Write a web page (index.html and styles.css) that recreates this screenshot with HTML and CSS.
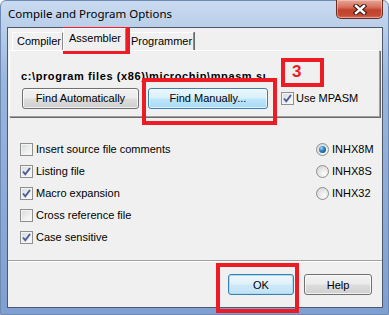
FILE: index.html
```html
<!DOCTYPE html>
<html lang="en">
<head>
    <meta charset="UTF-8">
    <title>Compile and Program Options</title>
    <link rel="stylesheet" href="styles.css">
</head>
<body>

    <div class="window">
        <div class="titlebar">
            <span class="title">Compile and Program Options</span>
            <span class="close">
                <svg width="14" height="11" viewBox="0 0 14 11">
                    <path d="M3 2 L11 9 M11 2 L3 9" stroke="#3a1d18" stroke-width="4.6" stroke-linecap="square"/>
                    <path d="M3 2 L11 9 M11 2 L3 9" stroke="#fff" stroke-width="2.4" stroke-linecap="square"/>
                </svg>
            </span>
        </div>

        <div class="client">
            <div class="tabs">
                <div class="tab">Compiler</div>
                <div class="tab active">Assembler</div>
                <div class="tab">Programmer</div>
            </div>

            <div class="panel">
                <div class="path">c:\program files (x86)\microchip\mpasm suite</div>
                <div class="panel-row">
                    <button class="btn find-auto">Find Automatically</button>
                    <button class="btn hot find-man">Find Manually...</button>
                    <label class="check use-mpasm">
                        <span class="box checked"><svg width="11" height="11" viewBox="0 0 11 11"><path d="M2 5.5 L4.3 8.3 L9 2" fill="none" stroke="#4a5d96" stroke-width="1.9"/></svg></span>
                        Use MPASM
                    </label>
                </div>
            </div>

            <div class="options">
                <div class="checks">
                    <label class="check"><span class="box"></span>Insert source file comments</label>
                    <label class="check"><span class="box checked"><svg width="11" height="11" viewBox="0 0 11 11"><path d="M2 5.5 L4.3 8.3 L9 2" fill="none" stroke="#4a5d96" stroke-width="1.9"/></svg></span>Listing file</label>
                    <label class="check"><span class="box checked"><svg width="11" height="11" viewBox="0 0 11 11"><path d="M2 5.5 L4.3 8.3 L9 2" fill="none" stroke="#4a5d96" stroke-width="1.9"/></svg></span>Macro expansion</label>
                    <label class="check"><span class="box"></span>Cross reference file</label>
                    <label class="check"><span class="box checked"><svg width="11" height="11" viewBox="0 0 11 11"><path d="M2 5.5 L4.3 8.3 L9 2" fill="none" stroke="#4a5d96" stroke-width="1.9"/></svg></span>Case sensitive</label>
                </div>
                <div class="radios">
                    <label class="radio"><span class="dot selected"></span>INHX8M</label>
                    <label class="radio"><span class="dot"></span>INHX8S</label>
                    <label class="radio"><span class="dot"></span>INHX32</label>
                </div>
            </div>

            <div class="separator"></div>

            <div class="footer">
                <button class="btn default ok">OK</button>
                <button class="btn help">Help</button>
            </div>
        </div>

        <!-- rode markeringar ovanpa skarmbilden -->
        <div class="mark mark-tab"></div>
        <div class="mark mark-step">3</div>
        <div class="mark mark-find"></div>
        <div class="mark mark-ok"></div>
    </div>

</body>
</html>
```

FILE: styles.css
```css
/* Grundstilar */
body {
    margin: 0;
    background-color: #fff;
    font-family: "Liberation Sans", Arial, sans-serif;
    font-size: 11px;
    color: #000;
}
.window {
    position: relative;
    width: 389px;
    height: 315px;
    box-sizing: border-box;
    border: 1px solid #6f8bb3;
    border-radius: 6px 6px 0 0;
    padding: 0 5px 6px 6px;
    display: flex;
    flex-direction: column;
    background: linear-gradient(to bottom, #c9dbf0 0, #b9cfe9 26px, #9ab6de 80px, #7f9fd1 100%);
}

/* Titelrad */
.titlebar {
    height: 26px;
    display: flex;
    align-items: flex-start;
}
.title {
    font-family: "Noto Sans", "Liberation Sans", sans-serif;
    font-size: 11.5px;
    margin: 5px 0 0 1px;
    color: #000;
}
.close {
    margin-left: auto;
    margin-top: -1px;
    width: 47px;
    height: 19px;
    box-sizing: border-box;
    border: 1px solid #6d2c22;
    border-top: none;
    border-radius: 0 0 5px 5px;
    background: linear-gradient(to bottom, #e6a898 0, #d6705d 40%, #c2432c 55%, #c34a32 85%, #d9735e 100%);
    box-shadow: inset 0 0 0 1px rgba(255, 220, 210, 0.45);
    display: flex;
    align-items: center;
    justify-content: center;
}

/* Klientyta */
.client {
    flex: 1;
    border: 1px solid #4e5869;
    background-color: #f0f0f0;
    display: flex;
    flex-direction: column;
}
.tabs {
    height: 22px;
    display: flex;
    align-items: flex-end;
    padding-left: 4px;
}
.tab {
    height: 18px;
    box-sizing: border-box;
    padding: 2px 0 0 4px;
    background-color: #f0f0f0;
    border: 1px solid;
    border-color: #fff #8a8a8a transparent #fff;
    border-bottom: none;
    margin-bottom: 0;
}
.tab:nth-child(1) {
    width: 51px;
}
.tab:nth-child(3) {
    width: 68px;
    box-shadow: 1px 0 0 #6a6a6a;
}
.tab.active {
    width: 63px;
    height: 23px;
    margin-bottom: -1px;
    padding: 3px 0 0 5px;
    position: relative;
    z-index: 1;
}
.panel {
    margin: 0 2px 0 1px;
    height: 67px;
    box-sizing: border-box;
    border: 1px solid;
    border-color: #fff #a0a0a0 #a0a0a0 #fff;
    box-shadow: 1px 1px 0 #696969;
    padding: 19px 0 0 12px;
}
.path {
    font-weight: bold;
    letter-spacing: 0.6px;
    width: 245px;
    margin-left: -1px;
    line-height: 13px;
    white-space: nowrap;
    overflow: hidden;
}
.panel-row {
    display: flex;
    align-items: center;
    margin-top: 4px;
}

/* Knappar */
.btn {
    height: 21px;
    box-sizing: border-box;
    padding: 0;
    font-family: inherit;
    font-size: 11px;
    color: #000;
    border: 1px solid #707070;
    border-radius: 3px;
    background: linear-gradient(to bottom, #f2f2f2 0%, #ebebeb 48%, #dddddd 52%, #cfcfcf 100%);
    box-shadow: inset 0 0 0 1px rgba(255, 255, 255, 0.7);
}
.btn.hot, .btn.default {
    border-color: #3c7fb1;
    background: linear-gradient(to bottom, #eaf6fd 0%, #d9f0fc 48%, #bee6fd 52%, #a7d9f5 100%);
}
.btn.default {
    background: linear-gradient(to bottom, #eef7fc 0%, #e0f1fb 48%, #cde9f8 52%, #c1e2f4 100%);
    box-shadow: inset 0 0 0 1px #a9dbf6;
}
.find-auto {
    width: 117px;
}
.find-man {
    width: 120px;
    margin-left: 9px;
}
.use-mpasm {
    margin-left: 13px;
}

/* Kryssrutor och radioknappar */
.check, .radio {
    display: flex;
    align-items: center;
    height: 22px;
}
.box {
    width: 13px;
    height: 13px;
    box-sizing: border-box;
    border: 1px solid #8e8f8f;
    margin-right: 3px;
    background: linear-gradient(135deg, #d7d9dc 0%, #f3f3f3 70%, #fbfbfb 100%);
    box-shadow: inset 0 0 0 1px #f4f4f4;
    display: flex;
    align-items: center;
    justify-content: center;
    flex-shrink: 0;
}
.use-mpasm .box {
    margin-right: 2px;
}
.options {
    height: 143px;
    box-sizing: border-box;
    padding: 21px 0 0 12px;
    display: grid;
    grid-template-columns: 1fr 66px;
    align-content: start;
}
.dot {
    width: 13px;
    height: 13px;
    box-sizing: border-box;
    border: 1px solid #8e8f8f;
    border-radius: 50%;
    margin-right: 3px;
    background: radial-gradient(circle at 65% 70%, #fefefe 0%, #e6e6e6 50%, #cfd0d2 100%);
    display: flex;
    align-items: center;
    justify-content: center;
}
.dot.selected::after {
    content: "";
    width: 7px;
    height: 7px;
    border-radius: 50%;
    background: radial-gradient(circle at 35% 30%, #9fdcf9 0%, #2f86c2 40%, #0b4476 100%);
}
.separator {
    border-top: 1px solid #a0a0a0;
    border-bottom: 1px solid #fff;
}
.footer {
    display: flex;
    justify-content: flex-end;
    gap: 10px;
    padding: 12px 10px 0 0;
}
.ok {
    width: 66px;
}
.help {
    width: 68px;
}

/* Markeringar */
.mark {
    position: absolute;
    border: 4px solid #ed1c24;
    box-sizing: border-box;
}
.mark-tab {
    left: 62px;
    top: 26px;
    width: 67px;
    height: 27px;
}
.mark-step {
    left: 280px;
    top: 57px;
    width: 43px;
    height: 29px;
    color: #ed1c24;
    font-weight: bold;
    font-size: 17px;
    line-height: 19px;
    padding-left: 7px;
}
.mark-find {
    left: 141px;
    top: 77px;
    width: 135px;
    height: 47px;
}
.mark-ok {
    left: 215px;
    top: 262px;
    width: 83px;
    height: 50px;
}
```
